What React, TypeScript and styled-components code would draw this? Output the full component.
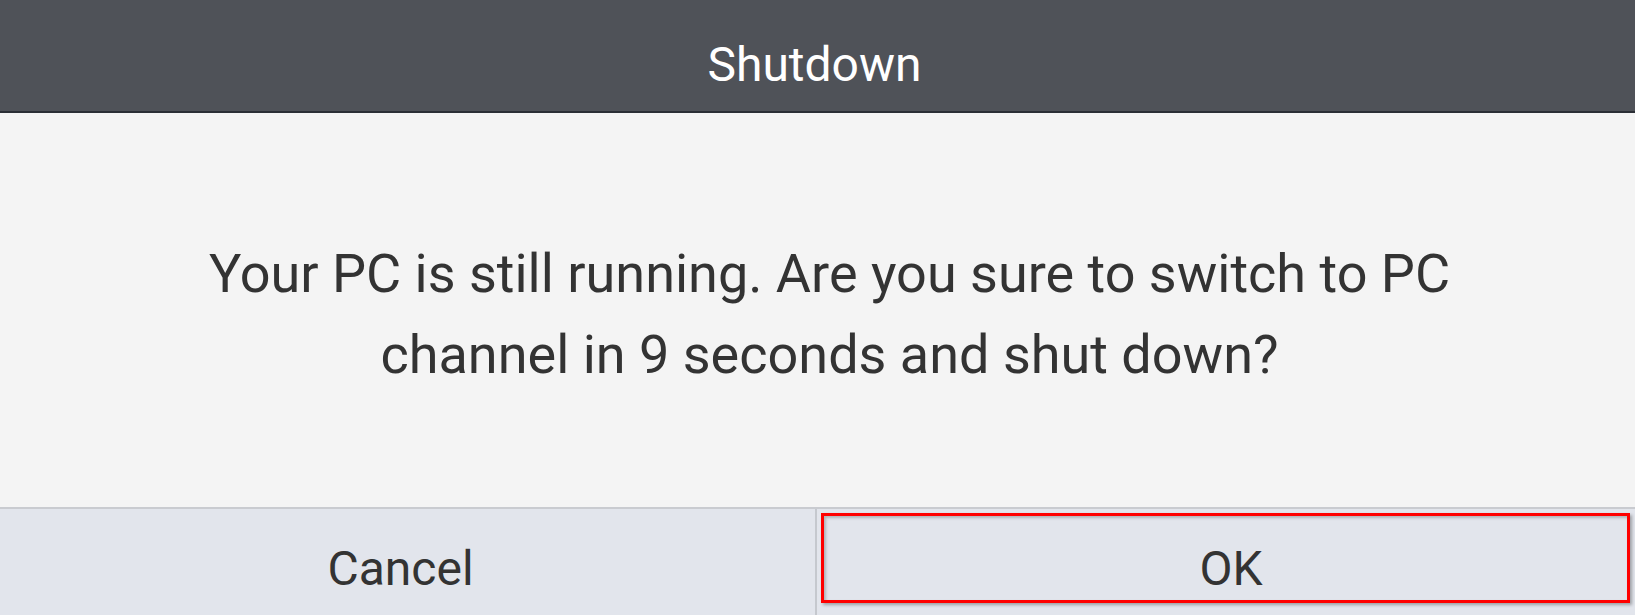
import React from "react";
import styled, { createGlobalStyle } from "styled-components";

const GlobalStyle = createGlobalStyle`
  html, body {
    margin: 0;
    padding: 0;
    background: #f4f4f4;
  }
  body {
    font-family: Roboto, "Noto Sans", "Liberation Sans", sans-serif;
  }
  * { box-sizing: border-box; }
`;

const Dialog = styled.div`
  width: 1635px;
  height: 615px;
  display: flex;
  flex-direction: column;
  background: #f4f4f4;
  overflow: hidden;
`;

const Header = styled.header`
  height: 113px;
  flex: none;
  display: flex;
  align-items: center;
  justify-content: center;
  padding: 17px 6px 0 0;
  background: #4f5258;
  border-bottom: 2px solid #2b2f35;
  color: #ffffff;
  font-size: 48px;
  font-weight: 400;
`;

const Body = styled.main`
  flex: 1;
  display: flex;
  align-items: center;
  justify-content: center;
  padding: 8px 0 0 24px;
`;

const Message = styled.p`
  margin: 0;
  width: 1300px;
  text-align: center;
  color: #333333;
  font-size: 54px;
  line-height: 81px;
`;

const Footer = styled.footer`
  height: 108px;
  flex: none;
  display: grid;
  grid-template-columns: 815px 1fr;
  border-top: 2px solid #c9cbd0;
  background: #e2e5ec;
`;

const FooterButton = styled.button<{ $focused?: boolean }>`
  position: relative;
  margin: 0;
  padding: ${(p) => (p.$focused ? "12px 0 0 10px" : "12px 14px 0 0")};
  border: none;
  border-left: ${(p) => (p.$focused ? "2px solid #c5c8ce" : "none")};
  background: #e2e5ec;
  color: #333333;
  font-family: inherit;
  font-size: 48px;
  font-weight: 400;
  cursor: pointer;
  display: flex;
  align-items: center;
  justify-content: center;

  &::after {
    content: "";
    display: ${(p) => (p.$focused ? "block" : "none")};
    position: absolute;
    top: 4px;
    left: 4px;
    right: 5px;
    bottom: 12px;
    border: 3px solid #ff0000;
    box-shadow: 2px 2px 3px rgba(0, 0, 0, 0.3),
      inset 2px 2px 3px rgba(0, 0, 0, 0.22);
    pointer-events: none;
  }
`;

export default function App() {
  return (
    <>
      <GlobalStyle />
      <Dialog>
        <Header>Shutdown</Header>
        <Body>
          <Message>
            Your PC is still running. Are you sure to switch to PC channel in 9
            seconds and shut down?
          </Message>
        </Body>
        <Footer>
          <FooterButton>Cancel</FooterButton>
          <FooterButton $focused>OK</FooterButton>
        </Footer>
      </Dialog>
    </>
  );
}
